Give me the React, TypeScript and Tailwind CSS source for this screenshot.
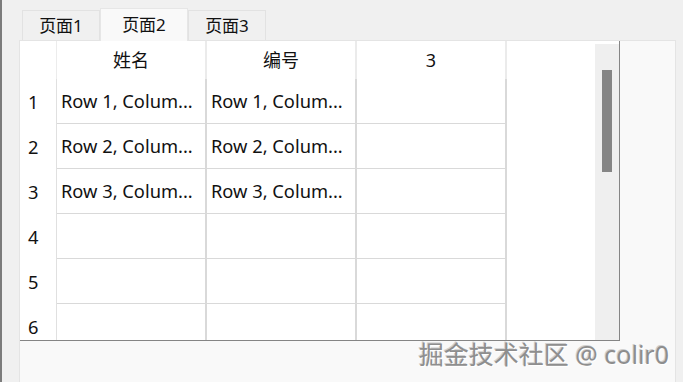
const FONT = "font-['Noto_Sans','Noto_Sans_CJK_SC',sans-serif]";

const columns = ["姓名", "编号", "3"];
const rows = [1, 2, 3, 4, 5, 6];

function cellText(row: number, col: number) {
  if (row > 3 || col > 1) return "";
  return `Row ${row}, Colum...`;
}

export default function App() {
  return (
    <div
      className={`relative w-[683px] h-[382px] overflow-hidden bg-[#f0f0f0] border-l-2 border-[#7c7c7c] text-[#111] ${FONT}`}
    >
      {/* tab bar */}
      <div className="flex items-end h-[40px] pl-[20px] text-[17px]">
        <div className="h-[30px] w-[78px] flex items-center justify-center bg-[#f0f0f0] border border-b-0 border-[#e2e2e2]">
          页面1
        </div>
        <div className="h-[33px] w-[88px] flex items-center justify-center bg-[#f9f9f9] border border-b-0 border-[#e6e6e6] -mb-px relative z-10">
          页面2
        </div>
        <div className="h-[30px] w-[78px] flex items-center justify-center bg-[#f0f0f0] border border-b-0 border-[#e2e2e2]">
          页面3
        </div>
      </div>

      {/* tab pane */}
      <div className="ml-[17px] w-[657px] h-[343px] bg-[#f9f9f9] border border-[#e4e4e4]">
        <div className="flex w-[600px] h-[300px] bg-white border-r border-b border-[#858585]">
          {/* table area */}
          <div className="flex-1 overflow-hidden">
            {/* header row */}
            <div className="flex h-[38px] text-[18px]">
              <div className="w-[37px] border-r border-[#ececec]" />
              {columns.map((c) => (
                <div
                  key={c}
                  className="w-[150px] flex items-center justify-center border-r-2 border-[#ebebeb]"
                >
                  {c}
                </div>
              ))}
            </div>
            {/* body rows */}
            {rows.map((r) => (
              <div key={r} className="flex h-[45px] text-[18.3px]">
                <div className="w-[37px] flex items-center pl-[8px] border-r border-[#e0e0e0]">
                  {r}
                </div>
                {columns.map((c, i) => (
                  <div
                    key={c}
                    className="w-[150px] flex items-center pl-[4px] border-r-2 border-b border-[#d9d9d9] whitespace-nowrap overflow-hidden"
                  >
                    {cellText(r, i)}
                  </div>
                ))}
              </div>
            ))}
          </div>

          {/* vertical scrollbar */}
          <div className="w-[24px] mt-[3px] bg-[#efefef] flex justify-center pt-[26px]">
            <div className="w-[10px] h-[102px] bg-[#858585]" />
          </div>
        </div>
      </div>

      {/* watermark */}
      <div className="absolute right-[14px] bottom-[15px] text-[25px] leading-none text-[#8e8e8e] [text-shadow:1px_1px_0_#ffffff,-1px_-1px_0_#d0d0d0]">
        掘金技术社区 @ colir0
      </div>
    </div>
  );
}
